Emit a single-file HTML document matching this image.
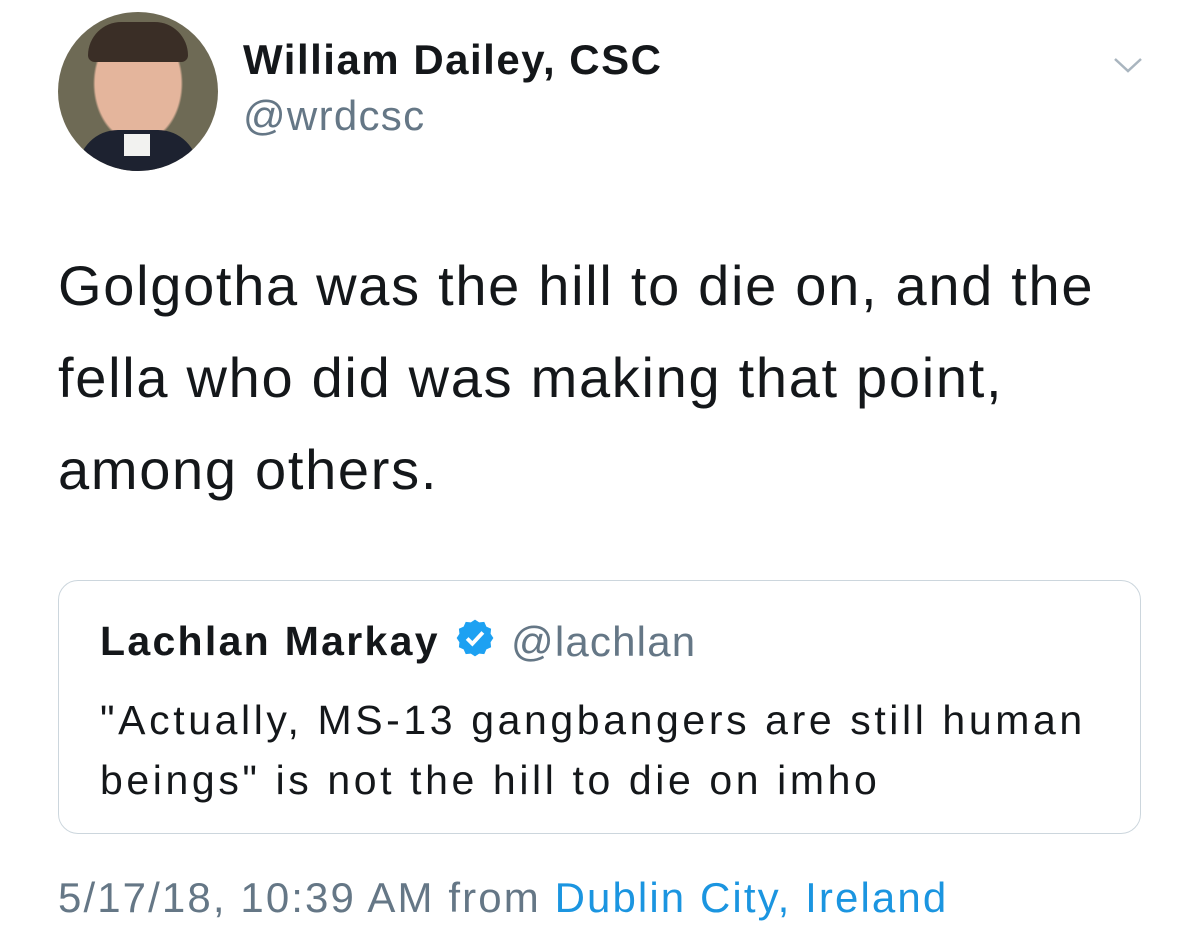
<!DOCTYPE html>
<html><head><style>
body{margin:0;width:1200px;height:941px;background:#fff;font-family:"Liberation Sans",sans-serif;position:relative;overflow:hidden}
.a{position:absolute;white-space:nowrap}
</style></head><body>
<div class="a" style="left:58px;top:12px;width:160px;height:159px;border-radius:50%;background:radial-gradient(ellipse 45px 60px at 50% 45%,#e4b59c 0 95%,transparent 100%),#6e6a55;overflow:hidden">
 <div class="a" style="left:30px;top:10px;width:100px;height:40px;border-radius:50px 50px 10px 10px;background:#3a2e26"></div>
 <div class="a" style="left:20px;top:118px;width:120px;height:60px;border-radius:40px 40px 0 0;background:#1d2230"></div>
 <div class="a" style="left:66px;top:122px;width:26px;height:22px;background:#f2f2f0"></div>
</div>
<div class="a" style="left:243px;top:36px;font-size:42px;letter-spacing:1.5px;font-weight:bold;color:#14171a">William Dailey, CSC</div>
<div class="a" style="left:243px;top:92px;font-size:42px;letter-spacing:1.3px;color:#657786">@wrdcsc</div>
<svg class="a" style="left:1112px;top:55px" width="32" height="20"><path d="M3 4 L16 16 L29 4" fill="none" stroke="#a9b5bf" stroke-width="2.5"/></svg>
<div class="a" style="left:58px;top:240px;font-size:56px;letter-spacing:1.7px;line-height:92px;color:#14171a">Golgotha was the hill to die on, and the<br>fella who did was making that point,<br>among others.</div>
<div class="a" style="left:58px;top:580px;width:1081px;height:252px;border:1.5px solid #ccd6dd;border-radius:20px"></div>
<div class="a" style="left:100px;top:618px;font-size:41px;letter-spacing:2.3px;font-weight:bold;color:#14171a">Lachlan Markay</div>
<svg class="a" style="left:454px;top:617px" width="42" height="42" viewBox="0 0 24 24"><path fill="#1da1f2" d="M12 1.5l2.4 1.6 2.9-.3 1.2 2.7 2.7 1.2-.3 2.9L22.5 12l-1.6 2.4.3 2.9-2.7 1.2-1.2 2.7-2.9-.3L12 22.5l-2.4-1.6-2.9.3-1.2-2.7-2.7-1.2.3-2.9L1.5 12l1.6-2.4-.3-2.9 2.7-1.2 1.2-2.7 2.9.3z"/><path d="M7.5 12.3l3 3 6-6.5" fill="none" stroke="#fff" stroke-width="2.2"/></svg>
<div class="a" style="left:511px;top:618px;font-size:42px;letter-spacing:1.2px;color:#657786">@lachlan</div>
<div class="a" style="left:100px;top:690px;font-size:41px;letter-spacing:3.6px;line-height:60px;color:#14171a">"Actually, MS-13 gangbangers are still human<br>beings" is not the hill to die on imho</div>
<div class="a" style="left:58px;top:874px;font-size:42px;letter-spacing:2.1px;color:#657786">5/17/18, 10:39 AM from <span style="color:#1b95e0">Dublin City, Ireland</span></div>
</body></html>
